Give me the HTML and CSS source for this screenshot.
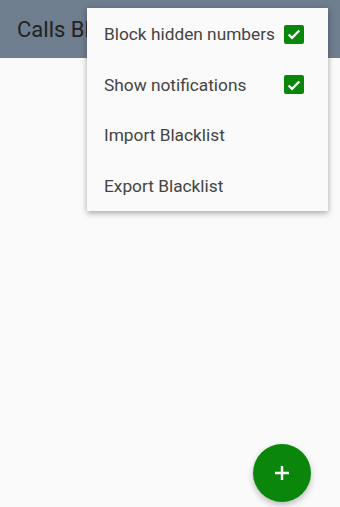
FILE: index.html
```html
<!DOCTYPE html>
<html>
<head>
<meta charset="utf-8">
<link rel="stylesheet" href="styles.css">
</head>
<body>
<div class="app">
  <header class="toolbar"><span class="title">Calls Blacklist</span></header>
  <main class="content"></main>
  <button class="fab" aria-label="Add">
    <svg width="18" height="18" viewBox="0 0 18 18"><path d="M9 2v14M2 9h14" stroke="#fff" stroke-width="2.4"/></svg>
  </button>
  <div class="menu">
    <div class="item"><span>Block hidden numbers</span><span class="check"><svg viewBox="0 0 18 18"><path d="M3 9.5l3.8 3.8 8.2-8.3" fill="none" stroke="#fff" stroke-width="2.6"/></svg></span></div>
    <div class="item"><span>Show notifications</span><span class="check"><svg viewBox="0 0 18 18"><path d="M3 9.5l3.8 3.8 8.2-8.3" fill="none" stroke="#fff" stroke-width="2.6"/></svg></span></div>
    <div class="item"><span>Import Blacklist</span></div>
    <div class="item"><span>Export Blacklist</span></div>
  </div>
</div>
</body>
</html>
```
FILE: styles.css
```css
html, body { margin: 0; padding: 0; }
body { font-family: Roboto, "Noto Sans", sans-serif; background: #fafafa; }
.app { position: relative; width: 340px; height: 507px; overflow: hidden; display: flex; flex-direction: column; }
.toolbar { height: 58px; background: #6e7e8f; display: flex; align-items: center; padding-left: 17px; flex-shrink: 0; }
.title { font-size: 22px; color: #222; white-space: nowrap; }
.content { flex: 1; }
.fab { position: absolute; left: 253px; top: 444px; width: 58px; height: 58px; border-radius: 50%; border: none; background: #0a870a; display: flex; align-items: center; justify-content: center; box-shadow: 0 3px 6px rgba(0,0,0,0.25); padding: 0; }
.menu { position: absolute; left: 87px; top: 8px; width: 241px; background: #fafafa; box-shadow: 0 2px 6px rgba(0,0,0,0.35); display: flex; flex-direction: column; height: 203px; box-sizing: border-box; padding-top: 1px; }
.item { height: 51px; display: flex; align-items: center; justify-content: space-between; padding: 0 24px 0 17px; font-size: 17.3px; color: #444; }
.check { width: 20px; height: 19px; background: #0a870a; border-radius: 2px; display: flex; align-items: center; justify-content: center; }
.check svg { width: 16px; height: 16px; }
```
